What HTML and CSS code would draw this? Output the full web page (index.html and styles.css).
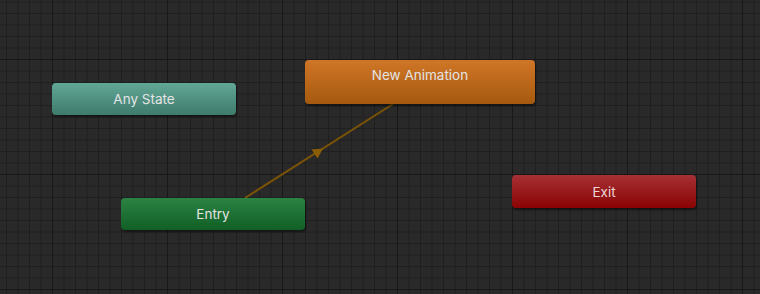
FILE: index.html
```html
<!DOCTYPE html>
<html lang="en">

<head>
    <meta charset="UTF-8">
    <meta name="viewport" content="width=device-width, initial-scale=1.0">
    <title>Animator</title>
    <link rel="stylesheet" href="styles.css">
</head>

<body>

    <div class="graph">
        <!-- transition Entry -> New Animation -->
        <svg class="links" width="760" height="294" viewBox="0 0 760 294">
            <line x1="245" y1="198" x2="393" y2="104" stroke="#7a5306" stroke-width="2" />
            <polygon points="311.5,149.5 323,148.5 317.5,158.5" fill="#8a5e06" />
        </svg>

        <div class="node any-state">Any State</div>
        <div class="node new-anim">New Animation</div>
        <div class="node entry">Entry</div>
        <div class="node exit">Exit</div>
    </div>

</body>

</html>
```

FILE: styles.css
```css
body {
    margin: 0;
    font-family: Inter, "Noto Sans", sans-serif;
}

.graph {
    position: relative;
    width: 760px;
    height: 294px;
    overflow: hidden;
    background-color: #292929;
    background-image:
        linear-gradient(to right, #181818 1px, transparent 1px),
        linear-gradient(to bottom, #181818 1px, transparent 1px),
        linear-gradient(to right, #1f1f1f 1px, transparent 1px),
        linear-gradient(to bottom, #1f1f1f 1px, transparent 1px);
    background-size: 115px 115px, 115px 115px, 11.5px 11.5px, 11.5px 11.5px;
    background-position: 52px 0, 0 59px, 6px 0, 0 1.5px;
}

.links {
    position: absolute;
    left: 0;
    top: 0;
}

.node {
    position: absolute;
    width: 184px;
    height: 32px;
    border-radius: 4px;
    display: flex;
    align-items: center;
    justify-content: center;
    font-size: 13.5px;
    color: #e4e4e4;
    box-shadow: 1px 2px 2px rgba(0, 0, 0, 0.45);
}

.any-state {
    left: 52px;
    top: 83px;
    background: linear-gradient(#62a796, #3e7b6c);
}

.new-anim {
    left: 305px;
    top: 60px;
    width: 230px;
    height: 44px;
    align-items: flex-start;
    padding-top: 7px;
    box-sizing: border-box;
    background: linear-gradient(#d07627, #a5590f);
}

.entry {
    left: 121px;
    top: 198px;
    background: linear-gradient(#2b8343, #115f26);
}

.exit {
    left: 512px;
    top: 175px;
    height: 33px;
    color: #ecd6d6;
    background: linear-gradient(#a53034, #8b0303);
}
```
